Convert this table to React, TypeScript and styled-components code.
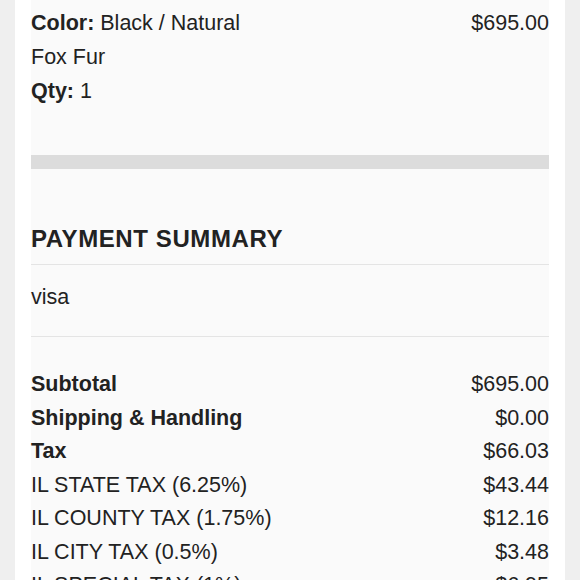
import React from "react";
import styled, { createGlobalStyle } from "styled-components";

const GlobalStyle = createGlobalStyle`
  html, body {
    margin: 0;
    padding: 0;
    background: #efefef;
    font-family: "Liberation Sans", Arial, sans-serif;
    color: #222;
  }
`;

const Page = styled.div`
  margin: 0 15px;
  padding: 0 16px;
  min-height: 580px;
  background: #fff;
`;

const Panel = styled.div`
  background: #fafafa;
`;

const ItemDetails = styled.div`
  padding: 6px 0 47px;
  display: flex;
  justify-content: space-between;
  font-size: 21.5px;
  line-height: 34px;
`;

const Line = styled.div`
  b {
    font-weight: 700;
  }
`;

const GrayBar = styled.div`
  height: 14px;
  background: #dcdcdc;
`;

const Section = styled.section`
  padding-top: 56px;
`;

const Heading = styled.h2`
  margin: 0;
  padding-bottom: 12px;
  font-size: 24px;
  line-height: 27px;
  font-weight: 700;
  letter-spacing: 0.6px;
  border-bottom: 1px solid #e4e4e4;
`;

const Method = styled.div`
  padding: 15px 0 22px;
  font-size: 21.5px;
  line-height: 34px;
  border-bottom: 1px solid #e4e4e4;
`;

const Totals = styled.div`
  padding-top: 31px;
`;

const Row = styled.div<{ $bold?: boolean }>`
  display: flex;
  justify-content: space-between;
  font-size: 21.5px;
  line-height: 33.5px;

  .label {
    font-weight: ${(p) => (p.$bold ? 700 : 400)};
  }
`;

const rows = [
  { label: "Subtotal", value: "$695.00", bold: true },
  { label: "Shipping & Handling", value: "$0.00", bold: true },
  { label: "Tax", value: "$66.03", bold: true },
  { label: "IL STATE TAX (6.25%)", value: "$43.44" },
  { label: "IL COUNTY TAX (1.75%)", value: "$12.16" },
  { label: "IL CITY TAX (0.5%)", value: "$3.48" },
  { label: "IL SPECIAL TAX (1%)", value: "$6.95" },
];

const App: React.FC = () => {
  return (
    <>
      <GlobalStyle />
      <Page>
        <Panel>
          <ItemDetails>
            <div>
              <Line>
                <b>Color:</b> Black / Natural
              </Line>
              <Line>Fox Fur</Line>
              <Line>
                <b>Qty:</b> 1
              </Line>
            </div>
            <Line>$695.00</Line>
          </ItemDetails>
          <GrayBar />
          <Section>
            <Heading>PAYMENT SUMMARY</Heading>
            <Method>visa</Method>
            <Totals>
              {rows.map((r) => (
                <Row key={r.label} $bold={r.bold}>
                  <span className="label">{r.label}</span>
                  <span>{r.value}</span>
                </Row>
              ))}
            </Totals>
          </Section>
        </Panel>
      </Page>
    </>
  );
};

export default App;
